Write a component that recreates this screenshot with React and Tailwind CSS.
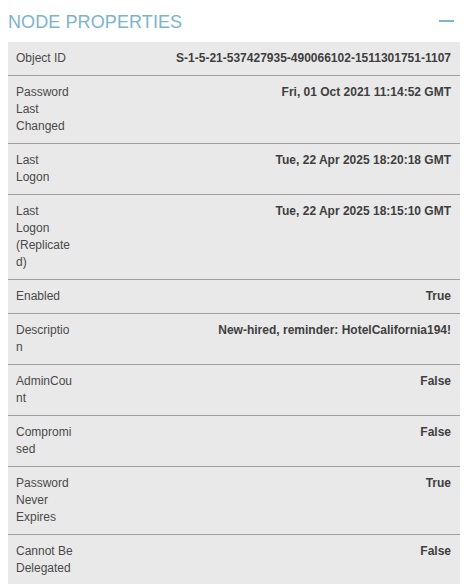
const rows = [
  ['Object ID', 'S-1-5-21-537427935-490066102-1511301751-1107'],
  ['Password Last Changed', 'Fri, 01 Oct 2021 11:14:52 GMT'],
  ['Last Logon', 'Tue, 22 Apr 2025 18:20:18 GMT'],
  ['Last Logon (Replicated)', 'Tue, 22 Apr 2025 18:15:10 GMT'],
  ['Enabled', 'True'],
  ['Description', 'New-hired, reminder: HotelCalifornia194!'],
  ['AdminCount', 'False'],
  ['Compromised', 'False'],
  ['Password Never Expires', 'True'],
  ['Cannot Be Delegated', 'False'],
];

const App = () => {
  return (
    <div className="w-[468px] h-[584px] overflow-hidden bg-white font-['Liberation_Sans',Arial,sans-serif]">
      {/* header */}
      <div className="flex items-center justify-between pl-2 pr-[14px] h-[42px]">
        <h2 className="text-[18px] leading-[20px] text-[#7cb4cc] tracking-[0.1px] mt-[1px]">NODE PROPERTIES</h2>
        <span className="block w-[15px] h-[2px] bg-[#7cb4cc]" />
      </div>

      <div className="mx-2 bg-[#e9e9e9]">
        {rows.map(([label, value]) => (
          <div key={label} className="flex items-start justify-between gap-2 pl-2 pr-[9px] py-2 border-b border-[#a0a0a0] text-[12px] leading-[17px]">
            <div className="w-[58px] shrink-0 break-words text-[#4a4a4a]">{label}</div>
            <div className="text-right font-bold text-[#3f3f3f]">{value}</div>
          </div>
        ))}
      </div>
    </div>
  );
};

export default App;
